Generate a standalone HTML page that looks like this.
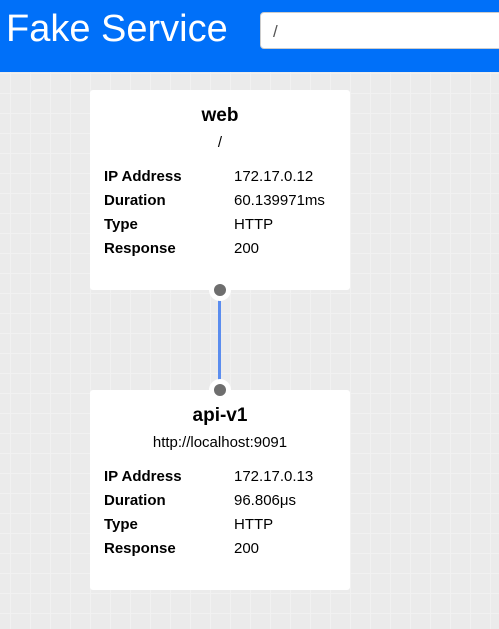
<!DOCTYPE html>
<html><head><style>
body{margin:0;width:499px;height:629px;overflow:hidden;font-family:"Liberation Sans",sans-serif;
background-color:#ebebeb;
background-image:linear-gradient(to right,#f1f1f1 1px,transparent 1px),linear-gradient(to bottom,#f1f1f1 1px,transparent 1px);
background-size:20px 20px;background-position:10px 13px;position:relative}
.hdr{position:absolute;left:0;top:0;width:499px;height:72px;background:#0070f9}
.hdr h1{margin:0;position:absolute;left:6px;top:8px;font-weight:normal;color:#fff;font-size:38px}
.inp{position:absolute;left:260px;top:12px;width:260px;height:37px;background:#fff;border-radius:4px;border:1px solid #ccc;box-sizing:border-box}
.inp span{position:absolute;left:12px;top:9px;font-size:17px;color:#555}
.card{position:absolute;left:90px;width:260px;height:200px;background:#fff;border-radius:3px}
.card .t{text-align:center;font-weight:bold;font-size:19px;margin-top:15px}
.card .s{text-align:center;font-size:15px;margin-top:7px}
table{position:absolute;left:14px;top:74px;border-collapse:collapse;font-size:15px}
td{padding:0;height:24px}
td:first-child{font-weight:bold;width:130px}
.dot{position:absolute;width:12px;height:12px;border-radius:50%;background:#6e6e6e;border:5px solid #fff}
.line{position:absolute;left:218px;top:296px;width:3px;height:88px;background:#5b8def}
</style></head><body>
<div class="hdr"><h1>Fake Service</h1><div class="inp"><span>/</span></div></div>
<div class="line"></div>
<div class="card" style="top:90px"><div class="t">web</div><div class="s">/</div>
<table><tr><td>IP Address</td><td>172.17.0.12</td></tr><tr><td>Duration</td><td>60.139971ms</td></tr><tr><td>Type</td><td>HTTP</td></tr><tr><td>Response</td><td>200</td></tr></table></div>
<div class="card" style="top:390px"><div class="t">api-v1</div><div class="s">http://localhost:9091</div>
<table><tr><td>IP Address</td><td>172.17.0.13</td></tr><tr><td>Duration</td><td>96.806μs</td></tr><tr><td>Type</td><td>HTTP</td></tr><tr><td>Response</td><td>200</td></tr></table></div>
<div class="dot" style="left:209px;top:279px"></div>
<div class="dot" style="left:209px;top:379px"></div>
</body></html>
